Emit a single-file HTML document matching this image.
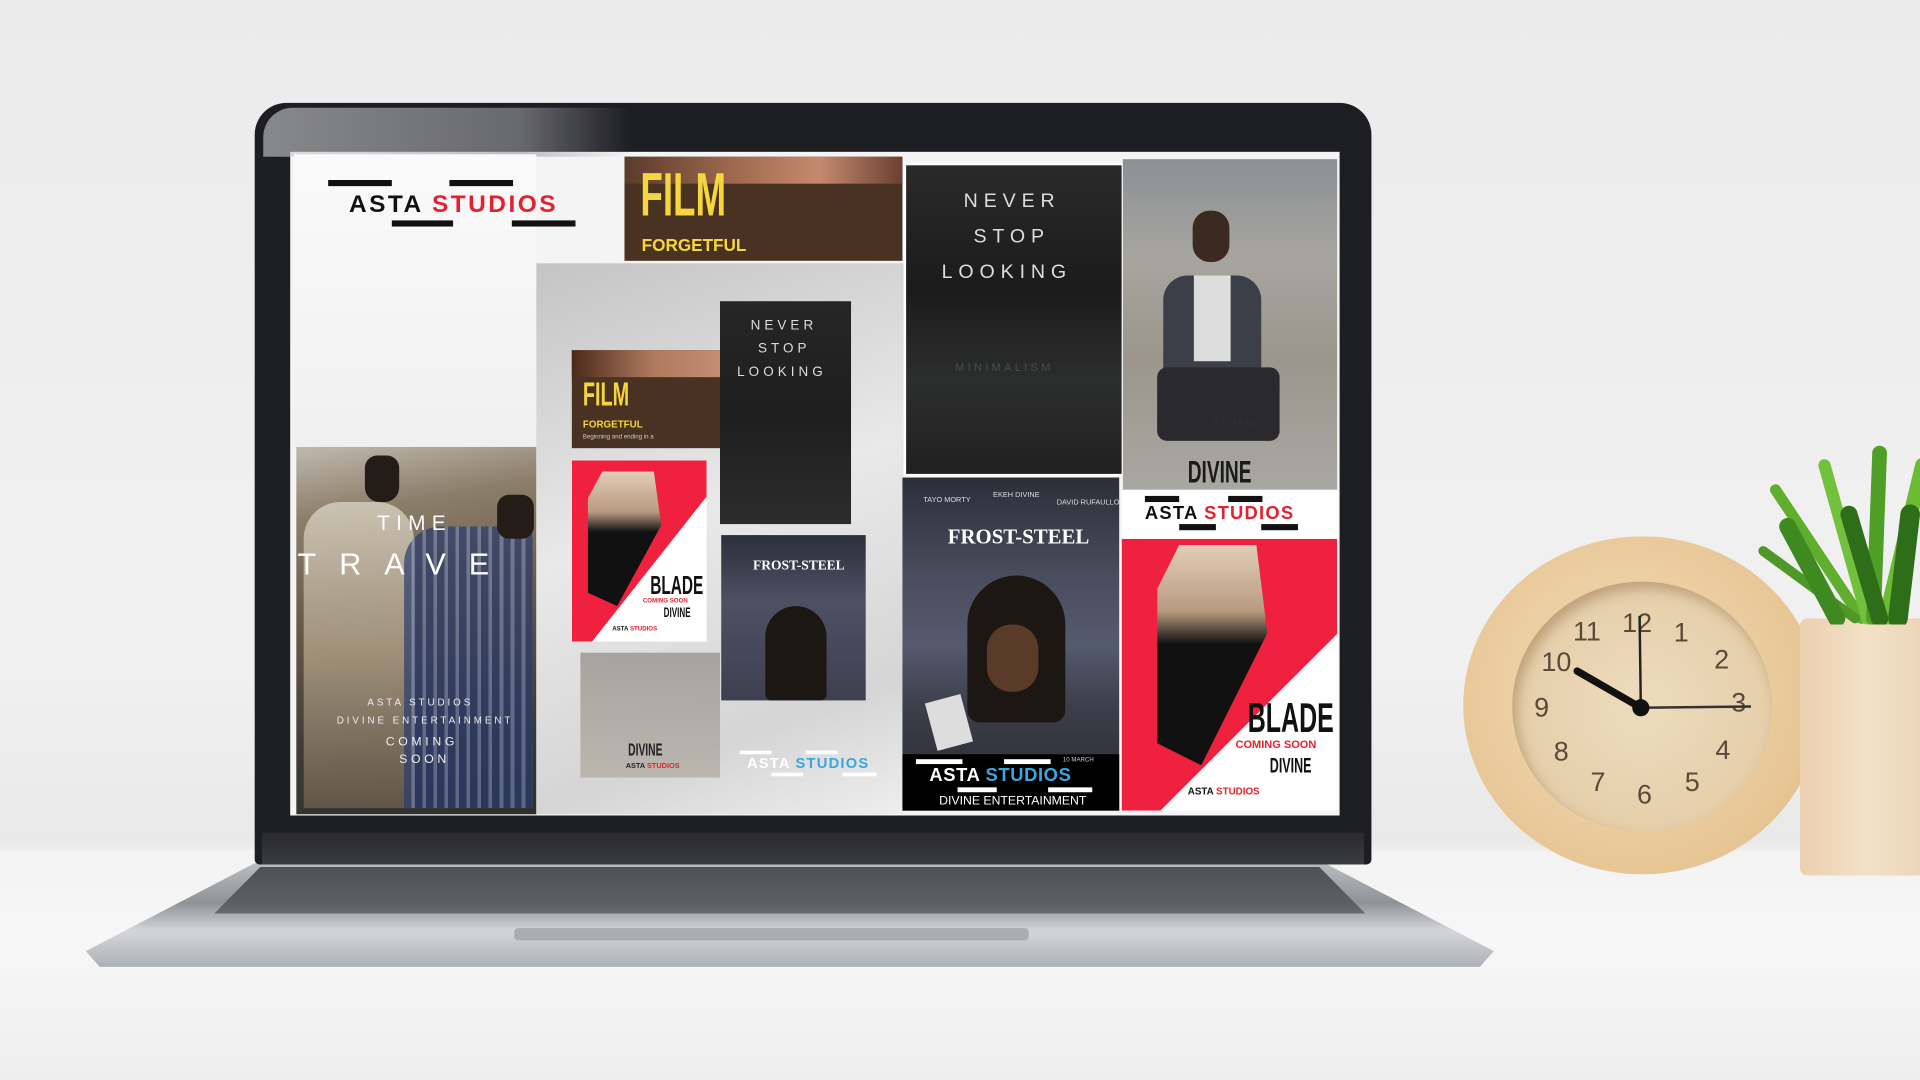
<!DOCTYPE html>
<html><head><meta charset="utf-8"><style>
html,body{margin:0;padding:0;width:1920px;height:1080px;overflow:hidden;background:#ececec}
#w{position:absolute;left:0;top:0;width:1568px;height:882px;transform:scale(1.22449);transform-origin:0 0;background:linear-gradient(#ebebeb,#f1f1f1 60%,#e9e9e9 78%,#f2f2f2 79%,#f6f6f6);font-family:"Liberation Sans",sans-serif;overflow:hidden}
.a{position:absolute}
.b{font-weight:bold}
.sp{letter-spacing:.3em}
.n{font-family:"Liberation Sans",sans-serif;font-weight:bold;transform:scaleX(.6);transform-origin:0 0;white-space:nowrap}
.logo span.r{color:#e2222e}
</style></head><body><div id="w">
<div class="a" style="left:0;top:695px;width:1568px;height:187px;background:linear-gradient(#f3f3f3,#f7f7f7 40%,#eee)"></div>
<div class="a" style="left:70px;top:705px;width:1150px;height:92px;background:linear-gradient(#b9bcc0,#8f9297 35%,#d4d6d9 60%,#a4a7ab);clip-path:polygon(12% 0,88% 0,100% 78%,99% 92%,1% 92%,0 78%);"></div>
<div class="a" style="left:175px;top:708px;width:940px;height:38px;background:linear-gradient(#3c3e42,#5a5d62);clip-path:polygon(4% 0,96% 0,100% 100%,0 100%);opacity:.85"></div>
<div class="a" style="left:420px;top:758px;width:420px;height:10px;background:#a9acb0;border-radius:3px"></div>
<div class="a" style="left:208px;top:84px;width:912px;height:622px;background:#1d1e21;border-radius:26px 26px 4px 4px"></div>
<div class="a" style="left:214px;top:680px;width:900px;height:26px;background:linear-gradient(#2a2b2e,#3b3c40)"></div>
<div class="a" style="left:237px;top:124px;width:857px;height:542px;background:#f4f4f4"></div>
<div class="a" style="left:215px;top:88px;width:300px;height:40px;background:linear-gradient(90deg,#cfd0d2,#9a9b9e 70%,transparent);opacity:.6;border-radius:24px 0 0 0"></div>
<div class="a" style="left:240px;top:126px;width:198px;height:240px;background:linear-gradient(#fafafa,#f0f0f0)"></div>
<div class="a" style="left:268px;top:147px;width:52px;height:5px;background:#111"></div>
<div class="a" style="left:367px;top:147px;width:52px;height:5px;background:#111"></div>
<div class="a" style="left:320px;top:180px;width:50px;height:5px;background:#111"></div>
<div class="a" style="left:418px;top:180px;width:52px;height:5px;background:#111"></div>
<div class="a b logo" style="left:285px;top:156px;font-size:20px;letter-spacing:2px;color:#111">ASTA <span class="r">STUDIOS</span></div>
<div class="a" style="left:242px;top:365px;width:196px;height:300px;background:linear-gradient(170deg,#bfb9ae 0%,#8c7f6a 18%,#6c5e4b 40%,#3e3a35 75%,#2c302b)"></div>
<div class="a" style="left:248px;top:410px;width:90px;height:250px;background:linear-gradient(#ddd7c9,#b5a58a 50%,#6f6250);opacity:.75;border-radius:30px 30px 0 0"></div>
<div class="a" style="left:330px;top:430px;width:105px;height:230px;background:repeating-linear-gradient(90deg,#283a6e 0 6px,#7080a8 6px 9px);opacity:.7;border-radius:30px 10px 0 0"></div>
<div class="a" style="left:298px;top:372px;width:28px;height:38px;background:#241d17;border-radius:10px 10px 12px 12px"></div>
<div class="a" style="left:406px;top:404px;width:30px;height:36px;background:#241d17;border-radius:10px"></div>
<div class="a sp" style="left:308px;top:418px;font-size:17px;color:#fff">TIME</div>
<div class="a" style="left:243px;top:447px;font-size:25px;color:#fff;letter-spacing:.75em">TRAVE</div>
<div class="a sp" style="left:300px;top:569px;font-size:8px;color:#eee">ASTA STUDIOS</div>
<div class="a sp" style="left:275px;top:584px;font-size:8px;color:#eee">DIVINE ENTERTAINMENT</div>
<div class="a sp" style="left:315px;top:601px;font-size:10px;color:#eee">COMING</div>
<div class="a sp" style="left:326px;top:615px;font-size:10px;color:#eee">SOON</div>
<div class="a" style="left:438px;top:215px;width:300px;height:450px;background:linear-gradient(160deg,#c4c4c4,#e9e9e9 45%,#d5d5d5 80%,#eee)"></div>
<div class="a" style="left:510px;top:128px;width:227px;height:85px;background:#4a3222"></div>
<div class="a" style="left:510px;top:128px;width:227px;height:22px;background:linear-gradient(90deg,#5b3b2a,#a06a50 40%,#c58a6e 70%,#6a4030)"></div>
<div class="a n" style="left:523px;top:130px;font-size:50px;color:#f5d63c">FILM</div>
<div class="a b" style="left:524px;top:192px;font-size:14px;color:#f5d63c">FORGETFUL</div>
<div class="a" style="left:738px;top:133px;width:179px;height:256px;background:#fff"></div>
<div class="a" style="left:740px;top:135px;width:176px;height:252px;background:linear-gradient(#2a2a2a,#1b1b1b 40%,#2c2e2d 70%,#202020)"></div>
<div class="a sp" style="left:787px;top:156px;font-size:16px;color:#ddd">NEVER</div>
<div class="a sp" style="left:795px;top:185px;font-size:16px;color:#ddd">STOP</div>
<div class="a sp" style="left:769px;top:214px;font-size:16px;color:#ddd">LOOKING</div>
<div class="a sp" style="left:780px;top:295px;font-size:9px;color:#4a4a55">MINIMALISM</div>
<div class="a" style="left:917px;top:130px;width:175px;height:270px;background:linear-gradient(#8c8f94,#a7a59f 30%,#9b968d 60%,#a9a7a2)"></div>
<div class="a" style="left:950px;top:225px;width:80px;height:90px;background:#3c3f47;border-radius:20px 20px 5px 5px"></div>
<div class="a" style="left:975px;top:225px;width:30px;height:70px;background:#ddd"></div>
<div class="a" style="left:974px;top:172px;width:30px;height:42px;background:#3a2a20;border-radius:14px"></div>
<div class="a" style="left:945px;top:300px;width:100px;height:60px;background:#2a2a2e;border-radius:8px"></div>
<div class="a" style="left:990px;top:340px;font-size:8px;color:#333;letter-spacing:2px">02 May</div>
<div class="a n" style="left:970px;top:370px;font-size:26px;color:#1a1a1a">DIVINE</div>
<div class="a" style="left:737px;top:390px;width:177px;height:272px;background:linear-gradient(#2c2e38,#4a4d5e 30%,#555a6e 50%,#3b3d48 70%,#2a2a30)"></div>
<div class="a" style="left:790px;top:470px;width:80px;height:120px;background:#1d1714;border-radius:40px 40px 10px 10px"></div>
<div class="a" style="left:806px;top:510px;width:42px;height:55px;background:#5a3a28;border-radius:20px"></div>
<div class="a" style="left:760px;top:570px;width:30px;height:40px;background:#ddd;transform:rotate(-15deg)"></div>
<div class="a" style="left:754px;top:406px;font-size:6px;color:#ddd">TAYO MORTY</div>
<div class="a" style="left:811px;top:402px;font-size:6px;color:#ddd">EKEH DIVINE</div>
<div class="a" style="left:863px;top:408px;font-size:6px;color:#ddd">DAVID RUFAULLO</div>
<div class="a" style="left:774px;top:429px;font-size:17px;color:#fff;font-family:'Liberation Serif',serif;font-weight:bold">FROST-STEEL</div>
<div class="a" style="left:737px;top:616px;width:177px;height:46px;background:#000"></div>
<div class="a" style="left:748px;top:620px;width:38px;height:4px;background:#fff"></div>
<div class="a" style="left:820px;top:620px;width:38px;height:4px;background:#fff"></div>
<div class="a" style="left:782px;top:643px;width:32px;height:4px;background:#fff"></div>
<div class="a" style="left:856px;top:643px;width:36px;height:4px;background:#fff"></div>
<div class="a" style="left:868px;top:618px;font-size:5px;color:#ccc">10 MARCH</div>
<div class="a b" style="left:759px;top:625px;font-size:15px;color:#fff;letter-spacing:.5px">ASTA <span style="color:#3aa6e0">STUDIOS</span></div>
<div class="a" style="left:767px;top:649px;font-size:10px;color:#fff">DIVINE ENTERTAINMENT</div>
<div class="a" style="left:916px;top:400px;width:177px;height:262px;background:#fff"></div>
<div class="a" style="left:916px;top:440px;width:176px;height:222px;background:#f0203f;clip-path:polygon(0 0,100% 0,100% 35%,18% 100%,0 100%)"></div>
<div class="a" style="left:945px;top:445px;width:90px;height:180px;background:linear-gradient(#e2cdb8,#b99a80 30%,#111 45%,#111);clip-path:polygon(20% 0,90% 0,100% 40%,40% 100%,0 90%,0 20%)"></div>
<div class="a" style="left:935px;top:405px;width:28px;height:5px;background:#111"></div>
<div class="a" style="left:1003px;top:405px;width:28px;height:5px;background:#111"></div>
<div class="a" style="left:963px;top:428px;width:30px;height:5px;background:#111"></div>
<div class="a" style="left:1030px;top:428px;width:30px;height:5px;background:#111"></div>
<div class="a b" style="left:935px;top:411px;font-size:15px;letter-spacing:1px;color:#111">ASTA <span style="color:#e2222e">STUDIOS</span></div>
<div class="a n" style="left:1019px;top:568px;font-size:34px;color:#111">BLADE</div>
<div class="a b" style="left:1009px;top:603px;font-size:9px;color:#e2222e">COMING SOON</div>
<div class="a n" style="left:1037px;top:616px;font-size:17px;color:#111">DIVINE</div>
<div class="a b" style="left:970px;top:642px;font-size:8px;color:#111">ASTA <span style="color:#e2222e">STUDIOS</span></div>
<div class="a" style="left:467px;top:286px;width:133px;height:80px;background:#4a3222"></div>
<div class="a" style="left:467px;top:286px;width:133px;height:22px;background:linear-gradient(90deg,#4a2a1c,#b07a5e 50%,#c89078)"></div>
<div class="a n" style="left:476px;top:307px;font-size:27px;color:#f5d63c">FILM</div>
<div class="a b" style="left:476px;top:342px;font-size:8px;color:#f5d63c">FORGETFUL</div>
<div class="a" style="left:476px;top:354px;font-size:5px;color:#ccc">Beginning and ending in a</div>
<div class="a" style="left:588px;top:246px;width:107px;height:182px;background:linear-gradient(#262626,#1e1e1e 50%,#2b2c2b)"></div>
<div class="a sp" style="left:613px;top:260px;font-size:11px;color:#ddd">NEVER</div>
<div class="a sp" style="left:619px;top:279px;font-size:11px;color:#ddd">STOP</div>
<div class="a sp" style="left:602px;top:298px;font-size:11px;color:#ddd">LOOKING</div>
<div class="a" style="left:467px;top:376px;width:110px;height:148px;background:#fff"></div>
<div class="a" style="left:467px;top:376px;width:110px;height:148px;background:#f0203f;clip-path:polygon(0 0,100% 0,100% 20%,15% 100%,0 100%)"></div>
<div class="a" style="left:480px;top:385px;width:60px;height:110px;background:linear-gradient(#e2cdb8,#b99a80 30%,#111 45%,#111);clip-path:polygon(20% 0,90% 0,100% 40%,40% 100%,0 90%,0 20%)"></div>
<div class="a n" style="left:531px;top:467px;font-size:21px;color:#111">BLADE</div>
<div class="a b" style="left:525px;top:488px;font-size:5px;color:#e2222e">COMING SOON</div>
<div class="a n" style="left:542px;top:495px;font-size:11px;color:#111">DIVINE</div>
<div class="a b" style="left:500px;top:511px;font-size:5px;color:#111">ASTA <span style="color:#e2222e">STUDIOS</span></div>
<div class="a" style="left:589px;top:437px;width:118px;height:135px;background:linear-gradient(#2c2e3a,#4d5163 40%,#3e4050)"></div>
<div class="a" style="left:625px;top:495px;width:50px;height:77px;background:#1d1714;border-radius:25px 25px 5px 5px"></div>
<div class="a" style="left:615px;top:456px;font-size:11px;color:#fff;font-family:'Liberation Serif',serif;font-weight:bold">FROST-STEEL</div>
<div class="a" style="left:474px;top:533px;width:114px;height:102px;background:linear-gradient(#a09d97,#b7b3ab);opacity:.9"></div>
<div class="a n" style="left:513px;top:604px;font-size:14px;color:#222">DIVINE</div>
<div class="a b" style="left:511px;top:623px;font-size:6px;color:#222">ASTA <span style="color:#e2222e">STUDIOS</span></div>
<div class="a" style="left:604px;top:613px;width:26px;height:3px;background:#fff"></div>
<div class="a" style="left:658px;top:613px;width:26px;height:3px;background:#fff"></div>
<div class="a" style="left:630px;top:631px;width:26px;height:3px;background:#fff"></div>
<div class="a" style="left:688px;top:631px;width:28px;height:3px;background:#fff"></div>
<div class="a b" style="left:610px;top:616px;font-size:12px;color:#fff;letter-spacing:1px">ASTA <span style="color:#3aa6e0">STUDIOS</span></div>
<div class="a" style="left:1195px;top:438px;width:292px;height:276px;border-radius:50%;background:radial-gradient(circle at 45% 45%,#f2ddb8,#e7c594 70%,#d9b07e)"></div>
<div class="a" style="left:1235px;top:475px;width:212px;height:204px;border-radius:50%;background:radial-gradient(#eddcbd,#e2c9a2);box-shadow:inset 4px 6px 10px rgba(120,80,40,.35)"></div>
<svg class="a" style="left:1195px;top:438px" width="292" height="276" viewBox="0 0 292 276">
<g font-family="Liberation Sans,sans-serif" font-size="22" fill="#5a4a3a" text-anchor="middle">
<text x="142" y="78">12</text><text x="178" y="86">1</text><text x="211" y="108">2</text><text x="225" y="143">3</text><text x="212" y="182">4</text><text x="187" y="208">5</text><text x="148" y="218">6</text><text x="110" y="208">7</text><text x="80" y="183">8</text><text x="64" y="147">9</text><text x="76" y="110">10</text><text x="101" y="85">11</text></g>
<line x1="145" y1="140" x2="93" y2="110" stroke="#111" stroke-width="6" stroke-linecap="round"/>
<line x1="145" y1="140" x2="144" y2="65" stroke="#222" stroke-width="2"/>
<line x1="145" y1="140" x2="235" y2="139" stroke="#333" stroke-width="2"/>
<circle cx="145" cy="140" r="7" fill="#111"/></svg>
<div class="a" style="left:1470px;top:505px;width:110px;height:210px;background:linear-gradient(90deg,#ecd0b0,#f3e1c6 50%,#e9d3b5);border-radius:6px"></div>
<svg class="a" style="left:1430px;top:360px" width="140" height="150" viewBox="0 0 140 150">
<g stroke-linecap="round" fill="none">
<path d="M90 145 L20 40" stroke="#5fae2e" stroke-width="9"/>
<path d="M95 145 L60 20" stroke="#72c13c" stroke-width="10"/>
<path d="M100 145 L105 10" stroke="#4f9e25" stroke-width="12"/>
<path d="M110 145 L140 20" stroke="#6bbb34" stroke-width="12"/>
<path d="M85 145 L10 90" stroke="#4e9728" stroke-width="8"/>
<path d="M105 145 L80 60" stroke="#2f6e18" stroke-width="14"/>
<path d="M70 145 L30 70" stroke="#3f8a20" stroke-width="14"/>
<path d="M120 145 L130 60" stroke="#2f6e18" stroke-width="16"/>
</g></svg>
</div></body></html>
